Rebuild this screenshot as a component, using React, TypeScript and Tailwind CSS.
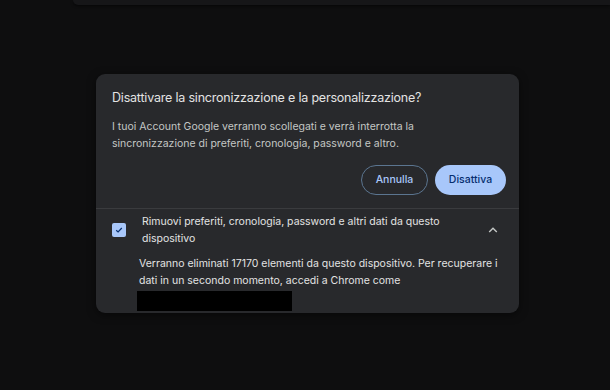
import React from "react";

export default function App() {
  return (
    <div
      className="w-[610px] h-[390px] bg-[#0e0e0f] overflow-hidden flex flex-col"
      style={{ fontFamily: "Inter, 'Liberation Sans', sans-serif" }}
    >
      <div className="ml-[73px] h-[5px] bg-[#161618] rounded-bl-[10px] shadow-[0_1px_3px_rgba(0,0,0,0.6)] shrink-0" />
      <div className="ml-[96px] mt-[69px] w-[423px] h-[239px] rounded-[9px] bg-[#28292c] shadow-[0_2px_8px_rgba(0,0,0,0.5)] flex flex-col">
        <div className="pl-4 pt-[14px]">
          <div className="text-[12.5px] leading-[20px] text-[#e3e3e3] tracking-[-0.2px] whitespace-nowrap">
            Disattivare la sincronizzazione e la personalizzazione?
          </div>
          <div className="mt-[10px] text-[10.5px] leading-[17px] text-[#c4c7c5] whitespace-nowrap">
            <div>I tuoi Account Google verranno scollegati e verrà interrotta la</div>
            <div>sincronizzazione di preferiti, cronologia, password e altro.</div>
          </div>
        </div>
        <div className="flex justify-end gap-[7px] pr-[13px] mt-[13px]">
          <button className="h-[30px] w-[67px] rounded-full border border-[#5b7590] text-[#a8c7fa] text-[10.5px] font-medium">
            Annulla
          </button>
          <button className="h-[30px] w-[71px] rounded-full bg-[#a8c7fa] text-[#062e6f] text-[10.5px] font-medium">
            Disattiva
          </button>
        </div>
        <div className="mt-[13px] h-px bg-[#3a3b3e]" />
        <div className="flex items-center pl-4 pr-[21px] pt-[4px]">
          <div className="w-[14px] h-[14px] rounded-[2px] bg-[#a8c7fa] flex items-center justify-center shrink-0">
            <svg width="10" height="10" viewBox="0 0 10 10">
              <path d="M2.2 5.2 L4.1 7 L7.8 3" fill="none" stroke="#062e6f" strokeWidth="1.2" />
            </svg>
          </div>
          <div className="ml-[16px] text-[10.5px] leading-[17px] text-[#e3e3e3] whitespace-nowrap">
            <div>Rimuovi preferiti, cronologia, password e altri dati da questo</div>
            <div>dispositivo</div>
          </div>
          <div className="ml-auto flex items-center">
            <svg width="10" height="6" viewBox="0 0 10 6">
              <path d="M1.2 5 L5 1.3 L8.8 5" fill="none" stroke="#c4c7c5" strokeWidth="1.4" />
            </svg>
          </div>
        </div>
        <div className="pl-[43px] mt-[9px] text-[10.5px] leading-[16.5px] text-[#e3e3e3] whitespace-nowrap">
          <div>Verranno eliminati 17170 elementi da questo dispositivo. Per recuperare i</div>
          <div>dati in un secondo momento, accedi a Chrome come</div>
          <div className="-ml-[2px] mt-[2px] w-[155px] h-[20px] bg-black" />
        </div>
      </div>
    </div>
  );
}
